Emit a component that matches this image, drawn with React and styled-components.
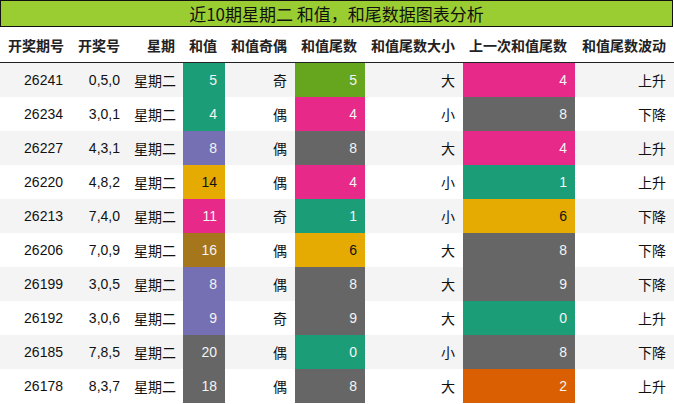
import React from "react";
import styled, { createGlobalStyle } from "styled-components";

const Global = createGlobalStyle`
  html, body { margin: 0; padding: 0; background: #fff; }
  body { font-family: "Liberation Sans", "Noto Sans CJK SC", sans-serif; color: #111; }
`;

const C = {
  teal: "#1b9e77",
  green: "#66a61e",
  pink: "#e7298a",
  gray: "#666666",
  purple: "#7570b3",
  yellow: "#e6ab02",
  brown: "#a6761d",
  orange: "#d95f02",
};

const rows = [
  ["26241", "0,5,0", "星期二", 5, "teal", "奇", 5, "green", "大", 4, "pink", "上升"],
  ["26234", "3,0,1", "星期二", 4, "teal", "偶", 4, "pink", "小", 8, "gray", "下降"],
  ["26227", "4,3,1", "星期二", 8, "purple", "偶", 8, "gray", "大", 4, "pink", "上升"],
  ["26220", "4,8,2", "星期二", 14, "yellow", "偶", 4, "pink", "小", 1, "teal", "上升"],
  ["26213", "7,4,0", "星期二", 11, "pink", "奇", 1, "teal", "小", 6, "yellow", "下降"],
  ["26206", "7,0,9", "星期二", 16, "brown", "偶", 6, "yellow", "大", 8, "gray", "下降"],
  ["26199", "3,0,5", "星期二", 8, "purple", "偶", 8, "gray", "大", 9, "gray", "下降"],
  ["26192", "3,0,6", "星期二", 9, "purple", "奇", 9, "gray", "大", 0, "teal", "上升"],
  ["26185", "7,8,5", "星期二", 20, "gray", "偶", 0, "teal", "小", 8, "gray", "下降"],
  ["26178", "8,3,7", "星期二", 18, "gray", "偶", 8, "gray", "大", 2, "orange", "上升"],
];

const headers = ["开奖期号", "开奖号", "星期", "和值", "和值奇偶", "和值尾数", "和值尾数大小", "上一次和值尾数", "和值尾数波动"];

const Page = styled.div`
  width: 674px;
  display: flex;
  flex-direction: column;
`;

const Title = styled.div`
  height: 25px;
  border: 1px solid #111;
  margin-right: 1px;
  background: #9acd32;
  display: flex;
  align-items: center;
  justify-content: center;
  font-family: "Noto Sans CJK SC", sans-serif;
  font-size: 17px;
  color: #111;
  line-height: 1;
`;

const Grid = styled.div`
  display: grid;
  grid-template-columns: 68px 60px 55px 42px 70px 70px 98px 112px 99px;
`;

const Head = styled.div`
  height: 35px;
  border-bottom: 1px solid #222;
  display: flex;
  align-items: center;
  justify-content: flex-end;
  padding-right: 8px;
  font-family: "Noto Sans CJK SC", sans-serif;
  font-weight: 700;
  font-size: 14px;
  color: #222;
  white-space: nowrap;
  &:first-child { justify-content: flex-start; padding-left: 8px; }
`;

const Cell = styled.div`
  height: 34px;
  display: flex;
  align-items: center;
  justify-content: flex-end;
  padding-right: ${(p) => (p.$pr != null ? p.$pr : 8)}px;
  font-size: 14px;
  background: ${(p) => (p.$bg ? C[p.$bg] : p.$odd ? "#f4f4f4" : "#fff")};
  color: ${(p) => (p.$bg ? (p.$bg === "yellow" ? "#111" : "#f4f4f4") : "#111")};
  white-space: nowrap;
`;

export default function App() {
  return (
    <Page>
      <Global />
      <Title>近10期星期二 和值，和尾数据图表分析</Title>
      <Grid>
        {headers.map((h) => (
          <Head key={h}>{h}</Head>
        ))}
        {rows.map((r, i) => {
          const odd = i % 2 === 0;
          return (
            <React.Fragment key={r[0]}>
              <Cell $odd={odd} $pr={5}>{r[0]}</Cell>
              <Cell $odd={odd}>{r[1]}</Cell>
              <Cell $odd={odd} $pr={7}>{r[2]}</Cell>
              <Cell $odd={odd} $bg={r[4]}>{r[3]}</Cell>
              <Cell $odd={odd}>{r[5]}</Cell>
              <Cell $odd={odd} $bg={r[7]}>{r[6]}</Cell>
              <Cell $odd={odd}>{r[8]}</Cell>
              <Cell $odd={odd} $bg={r[10]}>{r[9]}</Cell>
              <Cell $odd={odd}>{r[11]}</Cell>
            </React.Fragment>
          );
        })}
      </Grid>
    </Page>
  );
}
